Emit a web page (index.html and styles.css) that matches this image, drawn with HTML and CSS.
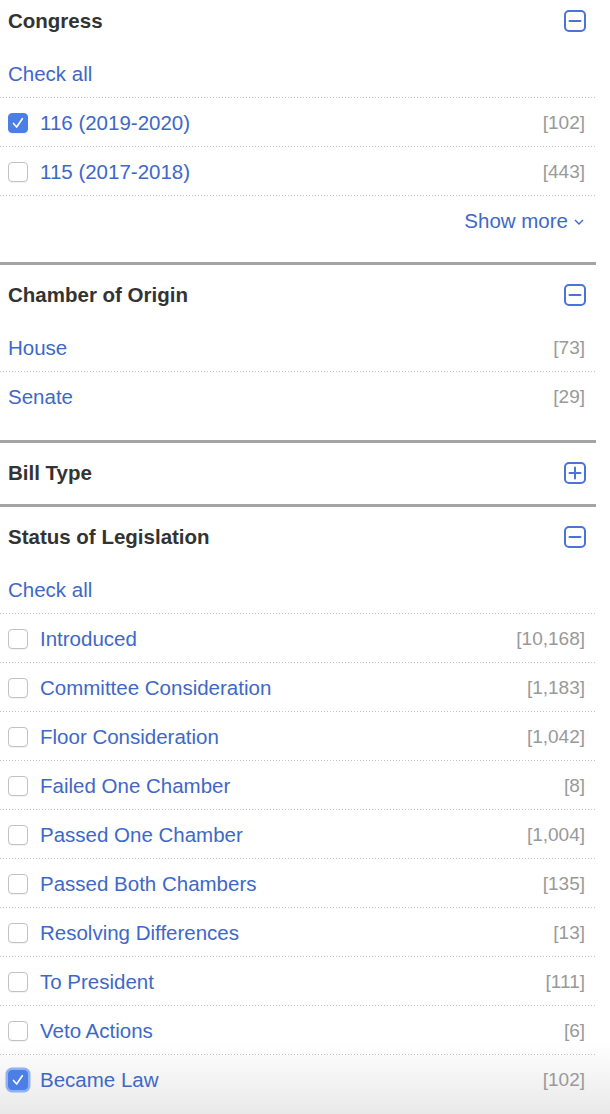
FILE: index.html
```html
<!DOCTYPE html>
<html lang="en">
<head>
<meta charset="utf-8">
<title>Filters</title>
<link rel="stylesheet" href="styles.css">
</head>
<body>
<div class="facets">
  <section class="facet facet-first">
    <div class="facet-head">
      <h2>Congress</h2>
      <svg class="toggle" viewBox="0 0 22 22" width="22" height="22"><rect x="1" y="1" width="20" height="20" rx="4" ry="4"/><line x1="5.5" y1="11" x2="16.5" y2="11"/></svg>
    </div>
    <ul class="facet-list">
      <li class="row"><a class="link">Check all</a></li>
      <li class="row"><span class="cb checked"><svg viewBox="0 0 20 20"><polyline points="5,10.5 8.5,14.5 14.8,5.2"/></svg></span><a class="link">116 (2019-2020)</a><span class="count">[102]</span></li>
      <li class="row"><span class="cb"></span><a class="link">115 (2017-2018)</a><span class="count">[443]</span></li>
      <li class="row row-more"><a class="link more">Show more<svg class="chev" viewBox="0 0 10 6" width="10" height="6"><polyline points="1,1 5,5 9,1"/></svg></a></li>
    </ul>
  </section>

  <section class="facet facet-chamber">
    <div class="facet-head">
      <h2>Chamber of Origin</h2>
      <svg class="toggle" viewBox="0 0 22 22" width="22" height="22"><rect x="1" y="1" width="20" height="20" rx="4" ry="4"/><line x1="5.5" y1="11" x2="16.5" y2="11"/></svg>
    </div>
    <ul class="facet-list">
      <li class="row"><a class="link">House</a><span class="count">[73]</span></li>
      <li class="row last"><a class="link">Senate</a><span class="count">[29]</span></li>
    </ul>
  </section>

  <section class="facet collapsed">
    <div class="facet-head">
      <h2>Bill Type</h2>
      <svg class="toggle" viewBox="0 0 22 22" width="22" height="22"><rect x="1" y="1" width="20" height="20" rx="4" ry="4"/><line x1="5.5" y1="11" x2="16.5" y2="11"/><line x1="11" y1="5.5" x2="11" y2="16.5"/></svg>
    </div>
  </section>

  <section class="facet">
    <div class="facet-head">
      <h2>Status of Legislation</h2>
      <svg class="toggle" viewBox="0 0 22 22" width="22" height="22"><rect x="1" y="1" width="20" height="20" rx="4" ry="4"/><line x1="5.5" y1="11" x2="16.5" y2="11"/></svg>
    </div>
    <ul class="facet-list">
      <li class="row"><a class="link">Check all</a></li>
      <li class="row"><span class="cb"></span><a class="link">Introduced</a><span class="count">[10,168]</span></li>
      <li class="row"><span class="cb"></span><a class="link">Committee Consideration</a><span class="count">[1,183]</span></li>
      <li class="row"><span class="cb"></span><a class="link">Floor Consideration</a><span class="count">[1,042]</span></li>
      <li class="row"><span class="cb"></span><a class="link">Failed One Chamber</a><span class="count">[8]</span></li>
      <li class="row"><span class="cb"></span><a class="link">Passed One Chamber</a><span class="count">[1,004]</span></li>
      <li class="row"><span class="cb"></span><a class="link">Passed Both Chambers</a><span class="count">[135]</span></li>
      <li class="row"><span class="cb"></span><a class="link">Resolving Differences</a><span class="count">[13]</span></li>
      <li class="row"><span class="cb"></span><a class="link">To President</a><span class="count">[111]</span></li>
      <li class="row"><span class="cb"></span><a class="link">Veto Actions</a><span class="count">[6]</span></li>
      <li class="row last"><span class="cb checked focus"><svg viewBox="0 0 20 20"><polyline points="5,10.5 8.5,14.5 14.8,5.2"/></svg></span><a class="link">Became Law</a><span class="count">[102]</span></li>
    </ul>
  </section>
</div>
</body>
</html>
```

FILE: styles.css
```css
html {
  height: 1114px;
  background: linear-gradient(to bottom, #ffffff 0, #ffffff 1042px, #e9e9e9 1114px);
}
body {
  margin: 0;
  font-family: "Liberation Sans", Arial, Helvetica, sans-serif;
  color: #333;
  overflow: hidden;
}
.facets {
  width: 596px;
}
.facet {
  border-bottom: 3px solid #a4a4a4;
  padding-bottom: 17px;
}
.facet.facet-chamber {
  padding-bottom: 19px;
}
.facet.collapsed {
  padding-bottom: 3px;
}
.facet-first {
  margin-top: -9px;
}
.facet-head {
  height: 58px;
  display: flex;
  align-items: center;
  justify-content: space-between;
  padding: 1px 10px 0 8px;
  box-sizing: border-box;
}
.facet-head h2 {
  margin: 0;
  font-size: 20.5px;
  font-weight: bold;
  color: #333;
}
.toggle {
  width: 22px;
  height: 22px;
  fill: none;
  stroke: #4a73d6;
  stroke-width: 2;
  stroke-linecap: round;
}
.facet-list {
  list-style: none;
  margin: 0;
  padding: 0;
}
.row {
  height: 49px;
  box-sizing: border-box;
  padding: 1px 11px 0 8px;
  display: flex;
  align-items: center;
  background-image: linear-gradient(to right, #c2c2c2 1px, transparent 1px);
  background-size: 3px 1px;
  background-repeat: repeat-x;
  background-position: 0 100%;
}
.row.last,
.row.row-more {
  background-image: none;
}
.row-more {
  justify-content: flex-end;
}
.link {
  color: #3e68c8;
  font-size: 20.5px;
  text-decoration: none;
  flex: 1;
}
.more {
  flex: none;
  display: flex;
  align-items: center;
  gap: 6px;
  margin-right: 1px;
}
.chev {
  fill: none;
  stroke: #3e68c8;
  stroke-width: 1.4;
  margin-top: 2px;
}
.count {
  color: #999;
  font-size: 19px;
}
.cb {
  width: 18px;
  height: 18px;
  border: 1px solid #c2c2c2;
  border-radius: 4px;
  background: #fff;
  margin-right: 12px;
  flex: none;
  display: flex;
  align-items: center;
  justify-content: center;
  box-shadow: 0 1px 1px rgba(0, 0, 0, 0.05);
}
.cb.checked {
  background: #4b7fe6;
  border-color: #4b7fe6;
}
.cb.focus {
  box-shadow: 0 0 0 2.5px #8fb0f2;
}
.cb svg {
  width: 18px;
  height: 18px;
  fill: none;
  stroke: #fff;
  stroke-width: 1.8;
  stroke-linecap: round;
  stroke-linejoin: round;
}
```
